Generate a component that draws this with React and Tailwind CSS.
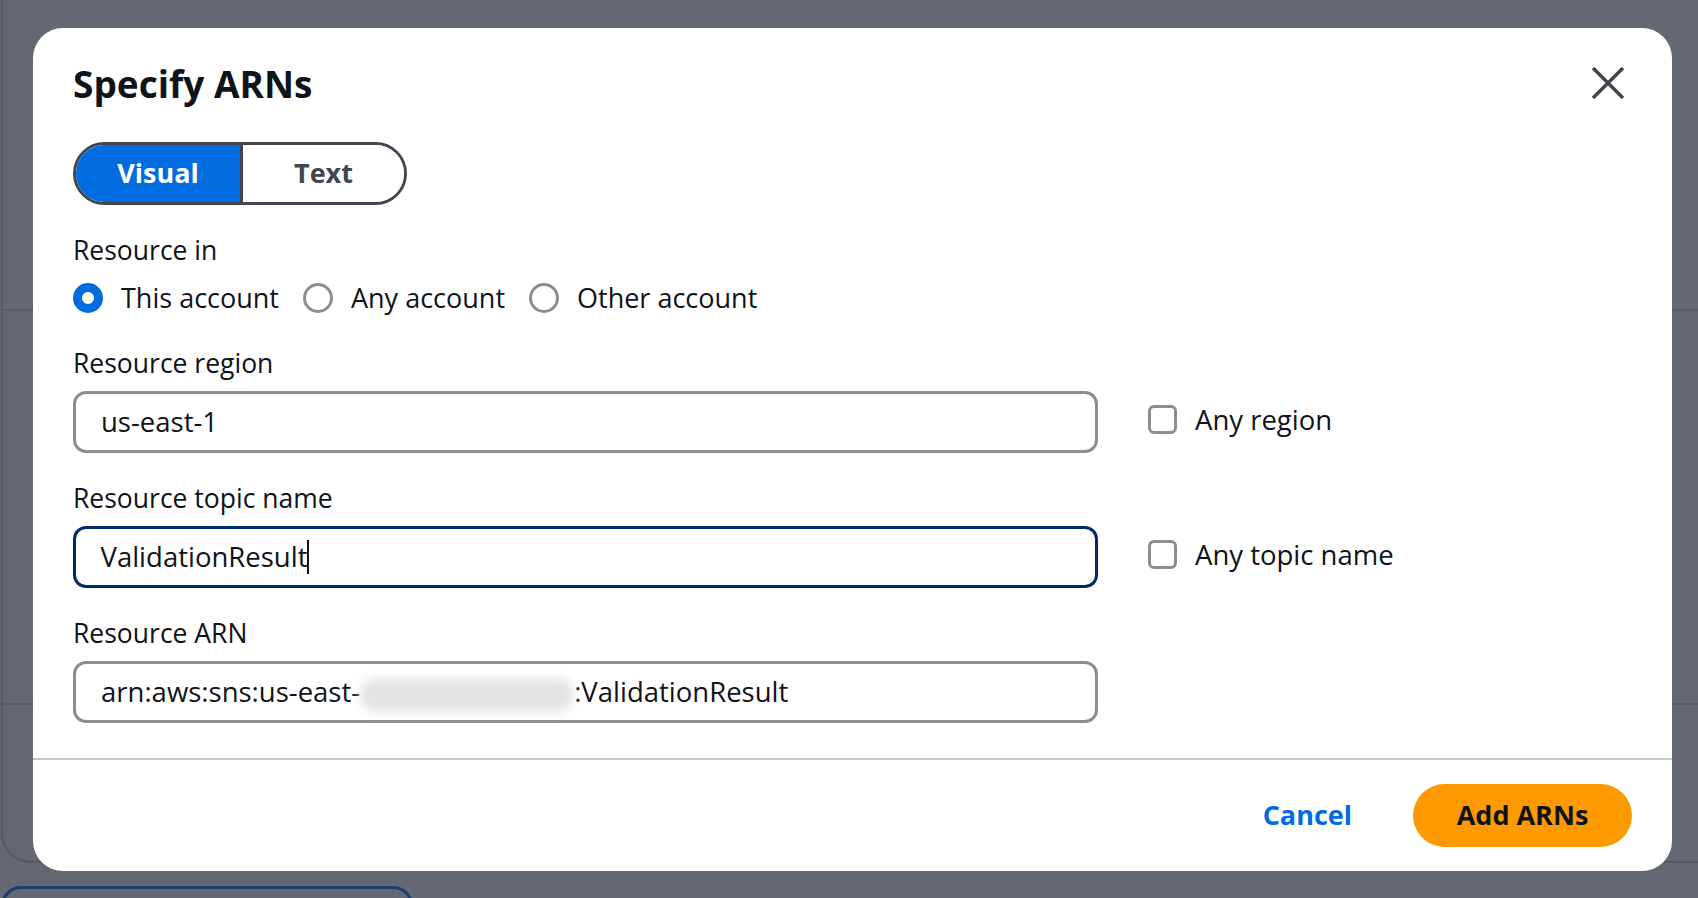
import { useState } from "react";

function Radio({ checked, label }) {
  return (
    <div className="flex items-center gap-[18px]">
      {checked ? (
        <span className="w-[30px] h-[30px] rounded-full bg-[#006ce0] flex items-center justify-center">
          <span className="w-[12px] h-[12px] rounded-full bg-white" />
        </span>
      ) : (
        <span className="w-[30px] h-[30px] rounded-full border-[3px] border-[#8c8c94] bg-white" />
      )}
      <span className="leading-[36px] text-[27px]">{label}</span>
    </div>
  );
}

function Checkbox({ label }) {
  return (
    <div className="flex items-center gap-[18px] ml-[50px] mb-[5px]">
      <span className="w-[29px] h-[29px] rounded-[6px] border-[3px] border-[#8c8c94] bg-white" />
      <span>{label}</span>
    </div>
  );
}

function Field({ label, children, side, first }) {
  return (
    <div className={first ? "mt-[29px]" : "mt-[27px]"}>
      <div className="leading-[36px] h-[36px] text-[26.5px]">{label}</div>
      <div className="flex items-center mt-[10px]">
        {children}
        {side}
      </div>
    </div>
  );
}

export default function App() {
  const [mode, setMode] = useState("visual");

  return (
    <div className="relative w-[1698px] h-[898px] overflow-hidden bg-[#636873] font-['Open_Sans',sans-serif] text-[#0f141a]">
      {/* page behind the overlay */}
      <div className="pl-[1px]">
        <div className="h-[863px] border-l-2 border-b-2 border-[#545964] rounded-bl-[30px] flex flex-col">
          <div className="h-[309px]" />
          <div className="h-[394px] border-t-2 border-[#585d67]" />
          <div className="flex-1 border-t-2 border-[#585d67]" />
        </div>
        <div className="mt-[23px] w-[412px] h-[40px] rounded-[22px] border-[3px] border-[#1f3f72]" />
      </div>

      {/* modal */}
      <div className="absolute inset-0 pl-[33px] pt-[28px]">
        <div className="w-[1639px] h-[843px] bg-white rounded-[30px] flex flex-col text-[27.5px]">
          <div className="flex items-start justify-between pl-[40px] pr-[48px] pt-[34px]">
            <h1 className="text-[37px] font-bold leading-[44px] h-[44px]">Specify ARNs</h1>
            <button className="mt-[5px] w-[32px] h-[32px]">
              <svg width="32" height="32" viewBox="0 0 32 32">
                <path d="M1 1L31 31M31 1L1 31" stroke="#424650" strokeWidth="3.5" fill="none" />
              </svg>
            </button>
          </div>

          <div className="px-[40px] flex-1">
            <div className="mt-[36px] w-[334px] h-[63px] rounded-full border-[3.5px] border-[#424650] overflow-hidden flex text-[27px] font-bold">
              <button
                onClick={() => setMode("visual")}
                className={`w-[164px] h-full ${mode === "visual" ? "bg-[#006ce0] text-white" : "bg-white text-[#424650]"}`}
              >
                Visual
              </button>
              <button
                onClick={() => setMode("text")}
                className={`flex-1 h-full border-l-[3.5px] border-[#424650] ${mode === "text" ? "bg-[#006ce0] text-white" : "bg-white text-[#424650]"}`}
              >
                Text
              </button>
            </div>

            <div className="mt-[27px] leading-[36px] h-[36px] text-[26.5px]">Resource in</div>
            <div className="mt-[12px] flex items-center gap-[24px]">
              <Radio checked label="This account" />
              <Radio label="Any account" />
              <Radio label="Other account" />
            </div>

            <Field
              first
              label="Resource region"
              side={<Checkbox label="Any region" />}
            >
              <div className="w-[1025px] h-[62px] rounded-[13px] border-[3px] border-[#8c8c94] flex items-center pl-[25px]">
                us-east-1
              </div>
            </Field>

            <Field label="Resource topic name" side={<Checkbox label="Any topic name" />}>
              <div className="w-[1025px] h-[62px] rounded-[13px] border-[3.5px] border-[#002b66] flex items-center pl-[24.5px]">
                <span>ValidationResult</span>
                <span className="w-[2px] h-[34px] bg-[#0f141a]" />
              </div>
            </Field>

            <Field label="Resource ARN">
              <div className="w-[1025px] h-[62px] rounded-[13px] border-[3px] border-[#8c8c94] flex items-center pl-[25px] whitespace-nowrap">
                <span>arn:aws:sns:us-east-</span>
                <span className="inline-block w-[214px] h-[34px] mt-[6px] rounded-full bg-[#e4e4e4] blur-[5px]" />
                <span>:ValidationResult</span>
              </div>
            </Field>
          </div>

          <div className="h-[2px] bg-[#c6c6cd]" />
          <div className="h-[111px] flex items-center justify-end gap-[61px] pr-[40px] pb-[1px]">
            <button className="text-[#006ce0] font-bold text-[27px]">Cancel</button>
            <button className="w-[219px] h-[63px] rounded-full bg-[#ff9900] text-[#0f141a] font-bold text-[27px]">
              Add ARNs
            </button>
          </div>
        </div>
      </div>
    </div>
  );
}
